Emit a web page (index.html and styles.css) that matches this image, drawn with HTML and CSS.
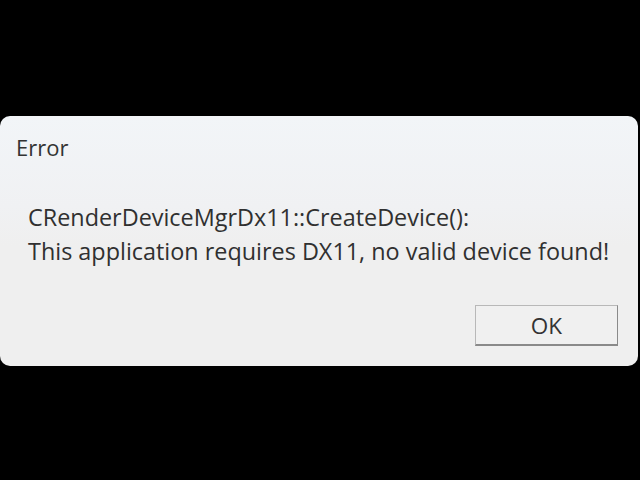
FILE: index.html
```html
<!DOCTYPE html>
<html lang="en">
<head>
<meta charset="UTF-8">
<title>Error</title>
<link rel="stylesheet" href="styles.css">
</head>
<body>
<div class="dialog">
  <div class="title">Error</div>
  <div class="message">
    <p>CRenderDeviceMgrDx11::CreateDevice():</p>
    <p>This application requires DX11, no valid device found!</p>
  </div>
  <div class="actions">
    <button class="btn">OK</button>
  </div>
</div>
</body>
</html>
```

FILE: styles.css
```css
/* ---------- PAGE ---------- */
html,body{margin:0;padding:0;background:#000;height:100%;}
body{padding-top:116px;box-sizing:border-box;font-family:"Open Sans","Noto Sans",sans-serif;color:#2a2a2a;}

/* ---------- DIALOG ---------- */
.dialog{width:638px;height:250px;background:linear-gradient(#f2f5f8 0,#f0f1f3 90px,#efefef 130px,#efefef 100%);border-radius:10px;box-sizing:border-box;display:flex;flex-direction:column;}
.title{font-size:22px;padding:16px 0 0 16px;line-height:30px;color:#333;}
.message{padding:38px 0 0 28px;font-size:23.4px;line-height:34px;color:#303030;}
.message p{margin:0;}
.actions{display:flex;justify-content:flex-end;padding:37px 20px 0 0;}
.btn{width:143px;height:41px;font-family:inherit;font-size:22.5px;color:#333;background:#f0f0f0;border:1px solid #b8b8b8;border-right-color:#8a8a8a;border-bottom:2px solid #8a8a8a;padding:0;}
```
